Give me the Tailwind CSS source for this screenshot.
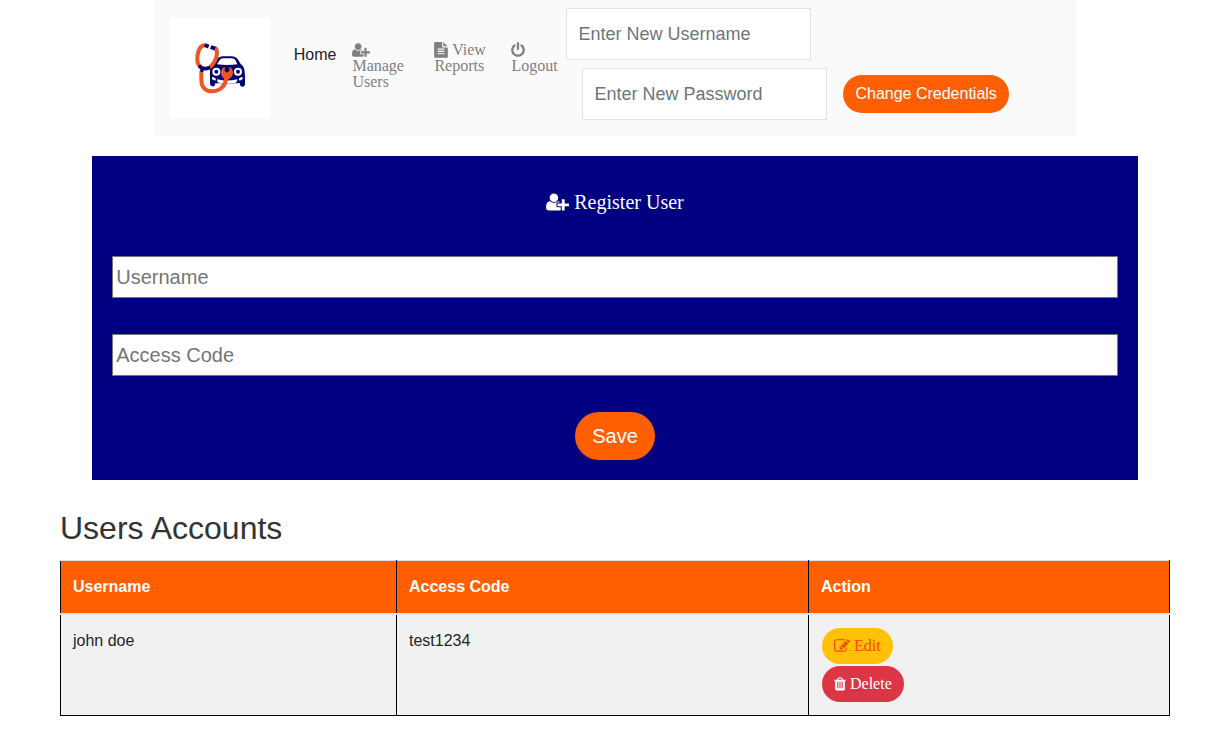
<!DOCTYPE html>
<html lang="en">
<head>
<meta charset="utf-8">
<meta name="viewport" content="width=device-width, initial-scale=1">
<title>Manage Users</title>
<script src="https://cdn.jsdelivr.net/npm/@tailwindcss/browser@4"></script>
</head>
<body class="bg-white text-base leading-6 text-[#212529] font-['Liberation_Sans',Arial,sans-serif]">
<svg class="hidden" aria-hidden="true">
  <symbol id="user-plus" viewBox="0 0 2048 1792"><path d="M704 896q-159 0-271.500-112.500T320 512t112.500-271.500T704 128t271.500 112.500T1088 512 975.500 783.500 704 896zm960 128h352q13 0 22.500 9.500t9.500 22.500v192q0 13-9.500 22.500t-22.500 9.500h-352v352q0 13-9.500 22.500t-22.500 9.500h-192q-13 0-22.500-9.500t-9.500-22.500v-352h-352q-13 0-22.500-9.500t-9.500-22.500v-192q0-13 9.500-22.500t22.500-9.500h352V672q0-13 9.500-22.500t22.500-9.500h192q13 0 22.500 9.500t9.500 22.500v352zm-736 224q0 52 38 90t90 38h256v238q-68 50-171 50H267q-121 0-194-69T0 1405q0-53 3.500-103.500t14-109T44 1084t43-97.500 62-81 85.500-53.500T346 832q19 0 39 17 79 61 154.500 91.500T704 971t164.500-30.500T1023 849q20-17 39-17 132 0 217 96h-223q-52 0-90 38t-38 90v192z"/></symbol>
  <symbol id="file-text" viewBox="0 -128 1536 1792"><path d="M1468 252q14 14 28 36h-472v-472q22 14 36 28zM992 416h544v1056q0 40-28 68t-68 28H96q-40 0-68-28t-28-68V-96q0-40 28-68t68-28h800v512q0 40 28 68t68 28zm160 736v-64q0-14-9-23t-23-9H416q-14 0-23 9t-9 23v64q0 14 9 23t23 9h704q14 0 23-9t9-23zm0-256v-64q0-14-9-23t-23-9H416q-14 0-23 9t-9 23v64q0 14 9 23t23 9h704q14 0 23-9t9-23zm0-256v-64q0-14-9-23t-23-9H416q-14 0-23 9t-9 23v64q0 14 9 23t23 9h704q14 0 23-9t9-23z" transform="translate(0 64)"/></symbol>
  <symbol id="power" viewBox="128 0 1536 1792"><path d="M1664 896q0 156-61 298t-164 245-245 164-298 61-298-61-245-164-164-245-61-298q0-182 80.500-343T435 283q43-32 95.500-25t83.500 50q32 42 24.500 94.500T589 487q-98 74-151.500 181T384 896q0 104 40.500 198.500T534 1258t163.500 109.500T896 1408t198.500-40.500T1258 1258t109.500-163.500T1408 896q0-121-53.500-228T1203 487q-42-32-49.500-84.500T1178 308q31-43 84-50t95 25q146 109 226.500 270T1664 896zM1024 128v640q0 52-38 90t-90 38-90-38-38-90V128q0-52 38-90t90-38 90 38 38 90z"/></symbol>
  <symbol id="edit" viewBox="0 0 1792 1792"><path d="M888 1184l116-116-152-152-116 116v56h96v96h56zm440-720q-16-16-33 1L945 815q-17 17-1 33t33-1l350-350q17-17 1-33zm80 594v190q0 119-84.500 203.500T1120 1536H288q-119 0-203.500-84.500T0 1248V416q0-119 84.500-203.500T288 128h832q63 0 117 25 15 7 18 23 3 17-9 29l-49 49q-14 14-32 8-23-6-45-6H288q-66 0-113 47t-47 113v832q0 66 47 113t113 47h832q66 0 113-47t47-113v-126q0-13 9-22l64-64q15-15 35-7t20 29zm-96-738l288 288-672 672H640V992zm444 132l-92 92-288-288 92-92q28-28 68-28t68 28l152 152q28 28 28 68t-28 68z"/></symbol>
  <symbol id="trash" viewBox="192 128 1408 1536"><path d="M704 1376V672q0-14-9-23t-23-9h-64q-14 0-23 9t-9 23v704q0 14 9 23t23 9h64q14 0 23-9t9-23zm256 0V672q0-14-9-23t-23-9h-64q-14 0-23 9t-9 23v704q0 14 9 23t23 9h64q14 0 23-9t9-23zm256 0V672q0-14-9-23t-23-9h-64q-14 0-23 9t-9 23v704q0 14 9 23t23 9h64q14 0 23-9t9-23zM672 384h448l-48-117q-7-9-17-11H738q-10 2-17 11zm928 32v64q0 14-9 23t-23 9h-96v948q0 83-47 143.500t-113 60.500H480q-66 0-113-58.500T320 1464V512h-96q-14 0-23-9t-9-23v-64q0-14 9-23t23-9h309l70-167q15-37 54-63t79-26h320q40 0 79 26t54 63l70 167h309q14 0 23 9t9 23z"/></symbol>
</svg>

<nav class="mx-auto flex w-3/4 items-center bg-[#fafafa] px-4 py-2" aria-label="Main">
  <a href="#" class="my-[10px] mr-4 block shrink-0 bg-white" aria-label="Car clinic">
    <svg class="block size-[100px]" viewBox="-30 -36 300 300" fill="none" stroke-linecap="round" stroke-linejoin="round">
      <path fill="#020570" d="M90 116Q94 106 103 101L111 87Q117 79 128 79H156Q167 79 173 87L182 102Q191 107 193 118L195 137V164Q194 170 187 170Q181 170 180 164V160H105V164Q104 170 97 169Q90 168 90 162V132Z"/>
      <path fill="#fff" d="M111 103L119 90Q122 85 129 85H156Q163 85 166 90L172 103Q142 107 111 103Z"/>
      <path fill="#fff" d="M112 148Q141 155 171 148Q174 158 164 159H119Q109 158 112 148Z"/>
      <circle cx="109" cy="125" r="9" stroke="#fff" stroke-width="6"/>
      <circle cx="174" cy="125" r="9" stroke="#fff" stroke-width="6"/>
      <path stroke="#fff" stroke-width="7" d="M99 145l5 3M185 145l-5 3"/>
      <path stroke="#f15523" stroke-width="12" d="M72 46C57 49 51 71 52 91Q53 104 61 110M105 54C114 60 112 78 105 92Q98 106 89 112M64 126V149C64 173 78 184 96 184C121 184 137 166 139 144"/>
      <path fill="#f15523" d="M134 110V123L141 128L148 123V110Q159 116 159 128Q158 141 146 147L141 154L132 152L134 146Q123 140 123 128Q123 115 134 110Z"/>
      <path stroke="#020570" stroke-width="12" stroke-linecap="butt" d="M74 45L86 50M92 51L105 56"/>
      <path stroke="#020570" stroke-width="11" d="M60 110Q73 119 86 114M67 116L66 121"/>
    </svg>
  </a>
  <ul class="flex shrink-0 items-start gap-4 self-start px-2 pt-[34px]">
    <li><a href="#" class="block pt-px">Home</a></li>
    <li class="w-[66px]"><a href="#" class="block font-['Liberation_Serif',serif] leading-4 text-[#808080]"><svg class="inline-block h-4 w-[18px] align-[-3px]" fill="currentColor"><use href="#user-plus"/></svg> Manage Users</a></li>
    <li class="w-[61px]"><a href="#" class="block font-['Liberation_Serif',serif] leading-4 text-[#808080]"><svg class="inline-block h-4 w-[14px] align-[-3px]" fill="currentColor"><use href="#file-text"/></svg> View Reports</a></li>
    <li class="w-[47px]"><a href="#" class="block font-['Liberation_Serif',serif] leading-4 text-[#808080]"><svg class="block h-4 w-[14px]" fill="currentColor"><use href="#power"/></svg>Logout</a></li>
  </ul>
  <form class="flex flex-col items-start gap-2 self-start">
    <input type="text" aria-label="Enter New Username" placeholder="Enter New Username" class="h-[52px] w-[245px] border border-[#e3e3e3] bg-white px-[11px] text-lg placeholder:text-[#6c757d]">
    <div class="flex items-center gap-4 pl-4">
      <input type="password" aria-label="Enter New Password" placeholder="Enter New Password" class="h-[52px] w-[245px] border border-[#e3e3e3] bg-white px-[11px] text-lg placeholder:text-[#6c757d]">
      <button type="button" class="h-[38px] shrink-0 rounded-full bg-[#ff5f00] px-3 whitespace-nowrap text-white">Change Credentials</button>
    </div>
  </form>
</nav>

<form class="mx-auto mt-5 flex w-[85%] flex-col items-center gap-9 bg-[#000080] p-5 text-xl">
  <h1 class="flex h-11 items-end gap-[5px] pb-2 font-['Liberation_Serif',serif] leading-5 text-white"><svg class="h-5 w-[23px]" fill="currentColor"><use href="#user-plus"/></svg>Register User</h1>
  <input type="text" aria-label="Username" placeholder="Username" class="h-[42px] w-full border border-[#767676] bg-white px-[3px] placeholder:text-[#757575]">
  <input type="text" aria-label="Access Code" placeholder="Access Code" class="h-[42px] w-full border border-[#767676] bg-white px-[3px] placeholder:text-[#757575]">
  <button type="button" class="h-12 w-20 rounded-full bg-[#ff5f00] text-white">Save</button>
</form>

<main class="mx-auto mt-7 max-w-[1140px] px-[15px]">
  <h2 class="mb-3 text-[32px] leading-10 text-[#333]">Users Accounts</h2>
  <table class="w-full table-fixed border-collapse">
    <colgroup><col class="w-[336px]"><col class="w-[412px]"><col></colgroup>
    <thead>
      <tr class="bg-[#ff5f00] text-left text-white">
        <th class="border-x border-t border-b-2 border-x-black border-y-[#dee2e6] px-3 py-[14px]">Username</th>
        <th class="border-x border-t border-b-2 border-x-black border-y-[#dee2e6] px-3 py-[14px]">Access Code</th>
        <th class="border-x border-t border-b-2 border-x-black border-y-[#dee2e6] px-3 py-[14px]">Action</th>
      </tr>
    </thead>
    <tbody>
      <tr class="bg-[#f1f1f1] align-top">
        <td class="border border-black px-3 py-[14px]">john doe</td>
        <td class="border border-black px-3 py-[14px]">test1234</td>
        <td class="border border-black p-3">
          <div class="flex flex-col items-start gap-[2px] p-px font-['Liberation_Serif',serif] leading-4">
            <button type="button" class="flex h-9 items-center gap-1 rounded-full bg-[#ffc107] px-3 text-[#ff4500]"><svg class="h-4 w-4" fill="currentColor"><use href="#edit"/></svg>Edit</button>
            <button type="button" class="flex h-9 items-center gap-1 rounded-full bg-[#dc3545] px-3 text-white"><svg class="h-[14px] w-3" fill="currentColor"><use href="#trash"/></svg>Delete</button>
          </div>
        </td>
      </tr>
    </tbody>
  </table>
</main>
</body>
</html>
